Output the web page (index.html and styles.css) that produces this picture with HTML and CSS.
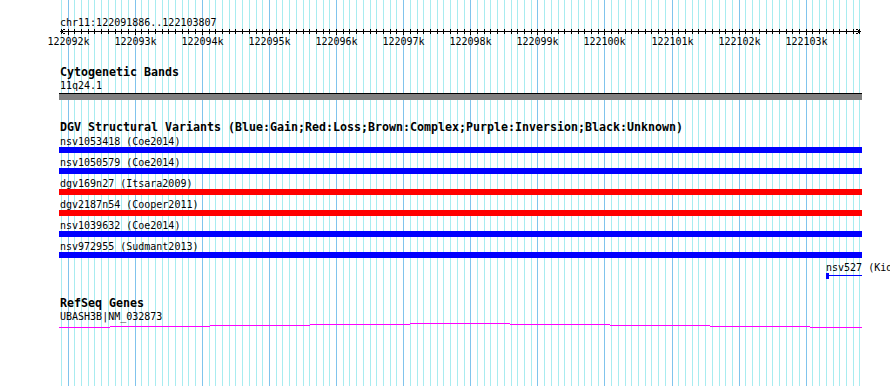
FILE: index.html
```html
<!DOCTYPE html>
<html lang="en">

<head>
    <meta charset="UTF-8" />
    <meta name="viewport" content="width=device-width, initial-scale=1.0" />
    <title>chr11:122091886..122103807</title>
    <link rel="stylesheet" href="styles.css">
</head>

<body>
    <div class="browser">
        <svg class="grid" id="grid" width="890" height="386"></svg>

        <div class="ruler">
            <div class="ruler-title">chr11:122091886..122103807</div>
            <svg class="axis" id="axis" width="890" height="18">
                <rect x="60" y="2" width="801" height="1" />
                <path d="M64.5 0 L60.5 2.5 L64.5 5" />
                <path d="M856.5 0 L860.5 2.5 L856.5 5" />
            </svg>
        </div>

        <div class="track cyto">
            <div class="track-title">Cytogenetic Bands</div>
            <div class="label">11q24.1</div>
            <div class="band"></div>
        </div>

        <div class="track dgv">
            <div class="track-title">DGV Structural Variants (Blue:Gain;Red:Loss;Brown:Complex;Purple:Inversion;Black:Unknown)</div>
            <div class="variant">
                <div class="label">nsv1053418 (Coe2014)</div>
                <div class="bar gain"></div>
            </div>
            <div class="variant">
                <div class="label">nsv1050579 (Coe2014)</div>
                <div class="bar gain"></div>
            </div>
            <div class="variant">
                <div class="label">dgv169n27 (Itsara2009)</div>
                <div class="bar loss"></div>
            </div>
            <div class="variant">
                <div class="label">dgv2187n54 (Cooper2011)</div>
                <div class="bar loss"></div>
            </div>
            <div class="variant">
                <div class="label">nsv1039632 (Coe2014)</div>
                <div class="bar gain"></div>
            </div>
            <div class="variant">
                <div class="label">nsv972955 (Sudmant2013)</div>
                <div class="bar gain"></div>
            </div>
            <div class="variant" style="margin-left: 766px">
                <div class="label">nsv527 (Kidd2008)</div>
                <div class="bar partial">
                    <span class="cap"></span>
                    <span class="line"></span>
                </div>
            </div>
        </div>

        <div class="track refseq">
            <div class="track-title">RefSeq Genes</div>
            <div class="label">UBASH3B|NM_032873</div>
            <svg class="gene" width="803" height="5">
                <rect x="0" y="4" width="51" height="1" />
                <rect x="51" y="3" width="100" height="1" />
                <rect x="151" y="2" width="100" height="1" />
                <rect x="251" y="1" width="100" height="1" />
                <rect x="351" y="0" width="100" height="1" />
                <rect x="451" y="1" width="100" height="1" />
                <rect x="551" y="2" width="100" height="1" />
                <rect x="651" y="3" width="100" height="1" />
                <rect x="751" y="4" width="52" height="1" />
            </svg>
        </div>
    </div>

    <script>
        const start = 122091886;
        const end = 122103807;
        const panelLeft = 60;
        const panelWidth = 800;
        const scale = panelWidth / (end - start + 1);
        const svgNS = 'http://www.w3.org/2000/svg';

        function xOf(bp) {
            return panelLeft + Math.round((bp - start) * scale);
        }

        function add(parent, tag, attrs, text) {
            const el = document.createElementNS(svgNS, tag);
            for (const name in attrs) {
                el.setAttribute(name, attrs[name]);
            }
            if (text) el.textContent = text;
            parent.appendChild(el);
        }

        const grid = document.getElementById('grid');
        const axis = document.getElementById('axis');

        for (let bp = Math.ceil(start / 100) * 100; bp <= end; bp += 100) {
            const x = xOf(bp);
            const major = bp % 1000 === 0;
            add(grid, 'rect', { x: x, y: 0, width: 1, height: 386, class: major ? 'major' : 'minor' });
            add(axis, 'rect', { x: x, y: 0, width: 1, height: major ? 6 : 5 });
            if (major) {
                add(axis, 'text', { x: x + 0.5, y: 16, class: 'tick-label' }, (bp / 1000) + 'k');
            }
        }
    </script>
</body>

</html>
```

FILE: styles.css
```css
* {
    box-sizing: border-box;
}

html,
body {
    margin: 0;
    padding: 0;
    width: 890px;
    height: 386px;
    overflow: hidden;
    background-color: #fff;
    color: #000;
    font-family: "DejaVu Sans Mono", "Liberation Mono", monospace;
    font-size: 10px;
}

.browser {
    position: relative;
    width: 890px;
    height: 386px;
}

/* background grid, drawn by the script */
.grid {
    position: absolute;
    top: 0;
    left: 0;
    shape-rendering: crispEdges;
}

.grid .minor {
    fill: #a8ecf0;
}

.grid .major {
    fill: #80c4ec;
}

.ruler,
.track {
    position: relative;
}

.ruler {
    padding-top: 16px;
}

.ruler-title {
    padding-left: 60px;
    line-height: 13px;
    height: 13px;
    white-space: nowrap;
}

.axis {
    display: block;
    shape-rendering: crispEdges;
}

.axis rect {
    fill: #000;
}

.axis path {
    fill: none;
    stroke: #000;
    stroke-width: 1;
}

.tick-label {
    font-family: "DejaVu Sans Mono", "Liberation Mono", monospace;
    font-size: 10px;
    text-anchor: middle;
    fill: #000;
}

.track {
    padding-left: 60px;
}

.track-title {
    font-weight: bold;
    font-size: 11.63px;
    line-height: 13px;
    height: 13px;
    white-space: nowrap;
}

.label {
    line-height: 13px;
    height: 13px;
    white-space: nowrap;
}

/* Cytogenetic Bands */
.cyto {
    margin-top: 19px;
}

.band {
    margin: 1px 0 0 -1px;
    width: 803px;
    height: 7px;
    border-top: 1px solid #000;
    background-color: #808080;
}

/* DGV Structural Variants */
.dgv {
    margin-top: 21px;
}

.variant {
    margin-bottom: 3px;
}

.dgv .track-title + .variant {
    margin-top: 1px;
}

.variant .label {
    height: 12px;
}

.bar {
    margin-left: -1px;
    width: 803px;
    height: 6px;
}

.bar.gain {
    background-color: #0000ff;
}

.bar.loss {
    background-color: #ff0000;
}

.bar.partial {
    margin-left: 0;
    width: 36px;
    display: flex;
    align-items: flex-start;
}

.partial .cap {
    width: 3px;
    height: 6px;
    background-color: #0000ff;
}

.partial .line {
    flex: 1;
    height: 1px;
    margin-top: 2px;
    background-color: #0000ff;
}

/* RefSeq Genes */
.refseq {
    margin-top: 18px;
}

.gene {
    display: block;
    margin-left: -1px;
    shape-rendering: crispEdges;
    fill: #ff00ff;
}
```
